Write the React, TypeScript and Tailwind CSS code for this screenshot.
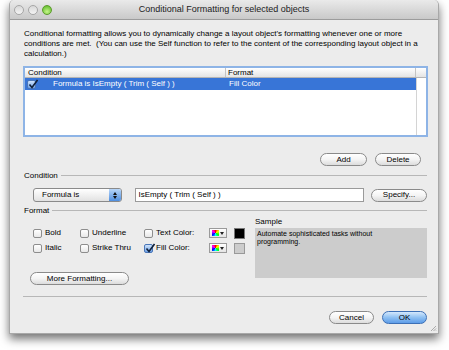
import React from "react";

const font = { fontFamily: '"Liberation Sans", Arial, sans-serif' };

const Check = ({ checked = false }: { checked?: boolean }) => (
  <span
    className={
      checked
        ? "relative inline-block w-[9px] h-[9px] rounded-[2px] border border-[#4a76b8] bg-gradient-to-b from-[#cfe3fb] to-[#6fa2e6] shrink-0"
        : "inline-block w-[9px] h-[9px] rounded-[2px] border border-[#8d8d8d] bg-gradient-to-b from-white to-[#e8e8e8] shrink-0"
    }
  >
    {checked && (
      <svg viewBox="0 0 10 10" className="absolute left-[0px] top-[-2px] w-[10px] h-[10px]">
        <path d="M1.5 5.5 L4 8.5 L9.5 1" stroke="#10203a" strokeWidth="1.6" fill="none" />
      </svg>
    )}
  </span>
);

const Button = ({ label, w, primary = false }: { label: string; w: string; primary?: boolean }) => (
  <div
    className={
      (primary
        ? "border-[#3c6fb5] bg-gradient-to-b from-[#d4e8fc] via-[#8ec0f2] to-[#5d9ce8] "
        : "border-[#8a8a8a] bg-gradient-to-b from-white via-[#f4f4f4] to-[#dcdcdc] ") +
      w +
      " h-[13px] rounded-full border flex items-center justify-center text-[8px] text-black leading-none"
    }
  >
    {label}
  </div>
);

const ColorPick = () => (
  <div className="w-[18px] h-[10px] border border-[#9a9a9a] bg-gradient-to-b from-white to-[#e4e4e4] flex items-center pl-[2px] gap-[1px]">
    <span className="w-[7px] h-[6px] bg-[conic-gradient(red,yellow,lime,cyan,blue,magenta,red)]" />
    <svg viewBox="0 0 4 3" className="w-[4px] h-[3px]">
      <path d="M0 0 H4 L2 3 Z" fill="#222" />
    </svg>
  </div>
);

export default function App() {
  return (
    <div className="w-[449px] h-[350px] bg-white overflow-hidden" style={font}>
      <div className="ml-[9px] w-[430px] h-[334px] rounded-t-[5px] bg-[#ececec] border-x border-b border-[#a8a8a8] shadow-[0_5px_10px_rgba(0,0,0,0.55)] flex flex-col">
        {/* title bar */}
        <div className="relative h-[20px] rounded-t-[5px] bg-gradient-to-b from-[#eaeaea] to-[#c9c9c9] border-b border-[#9c9c9c] flex items-center">
          <div className="flex gap-[4px] pl-[4px]">
            <span className="w-[10px] h-[10px] rounded-full border border-[#a6a6a6] bg-gradient-to-b from-[#d8d8d8] to-[#f4f4f4]" />
            <span className="w-[10px] h-[10px] rounded-full border border-[#a6a6a6] bg-gradient-to-b from-[#d8d8d8] to-[#f4f4f4]" />
            <span className="w-[10px] h-[10px] rounded-full border border-[#5c9a2c] bg-[radial-gradient(circle_at_50%_70%,#c6f58a,#52b51e)]" />
          </div>
          <div className="absolute inset-0 flex items-center justify-center text-[9px] text-[#222]">
            Conditional Formatting for selected objects
          </div>
        </div>

        <div className="pl-[13px] pr-[11px] flex flex-col">
          <p className="mt-[9px] pl-[1px] text-[8px] leading-[10px] text-black">
            Conditional formatting allows you to dynamically change a layout object's formatting whenever one or more
            conditions are met.&nbsp; (You can use the Self function to refer to the content of the corresponding layout
            object in a calculation.)
          </p>

          {/* table */}
          <div className="mt-[7px] w-[405px] h-[71px] border-2 border-[#8eb4e6] bg-white flex flex-col">
            <div className="h-[10px] flex bg-gradient-to-b from-white to-[#e4e4e4] border-b border-[#b5b5b5] text-[8px] leading-[10px]">
              <div className="w-[201px] pl-[3px] border-r border-[#c4c4c4]">Condition</div>
              <div className="w-[190px] pl-[2px] border-r border-[#c4c4c4]">Format</div>
              <div className="flex-1" />
            </div>
            <div className="flex flex-1">
              <div className="w-[391px] flex flex-col">
                <div className="h-[12px] bg-[#3875d7] flex items-center text-[8px] text-white">
                  <div className="w-[201px] flex items-center pl-[2px]">
                    <Check checked />
                    <span className="ml-[17px]">Formula is IsEmpty ( Trim ( Self ) )</span>
                  </div>
                  <div className="pl-[3px]">Fill Color</div>
                </div>
              </div>
              <div className="flex-1 border-l border-[#d4d4d4]" />
            </div>
          </div>

          {/* add / delete */}
          <div className="mt-[16px] flex justify-end gap-[8px] pr-[6px]">
            <Button label="Add" w="w-[47px]" />
            <Button label="Delete" w="w-[46px]" />
          </div>

          {/* condition */}
          <div className="mt-[5px] flex items-center gap-[3px] pl-[1px] text-[8px] leading-[10px]">
            <span>Condition</span>
            <span className="flex-1 h-[2px] border-t border-[#b7b7b7] border-b-white" />
          </div>
          <div className="mt-[7px] flex items-center pl-[10px]">
            <div className="w-[90px] h-[14px] rounded-[3px] border border-[#8a8a8a] bg-gradient-to-b from-white to-[#e2e2e2] flex items-center text-[8px]">
              <span className="flex-1 pl-[8px]">Formula is</span>
              <span className="w-[12px] h-full rounded-r-[2px] bg-gradient-to-b from-[#b8d6f8] to-[#4f8fe0] flex flex-col items-center justify-center gap-[1px]">
                <svg viewBox="0 0 4 3" className="w-[4px] h-[3px]"><path d="M0 3 H4 L2 0 Z" fill="#111" /></svg>
                <svg viewBox="0 0 4 3" className="w-[4px] h-[3px]"><path d="M0 0 H4 L2 3 Z" fill="#111" /></svg>
              </span>
            </div>
            <div className="ml-[13px] w-[230px] h-[14px] border border-[#9a9a9a] bg-white flex items-center pl-[2px] text-[8px]">
              IsEmpty ( Trim ( Self ) )
            </div>
            <div className="ml-[7px]">
              <Button label="Specify..." w="w-[56px]" />
            </div>
          </div>

          {/* format */}
          <div className="mt-[4px] flex items-center gap-[3px] pl-[1px] text-[8px] leading-[10px]">
            <span>Format</span>
            <span className="flex-1 h-[2px] border-t border-[#b7b7b7] border-b-white" />
          </div>
          <div className="flex mt-[1px]">
            <div className="w-[233px] flex flex-col pt-[11px] pl-[10px] text-[8px] leading-[10px]">
              <div className="flex items-center h-[10px]">
                <div className="w-[47px] flex items-center gap-[3px]"><Check />Bold</div>
                <div className="w-[64px] flex items-center gap-[3px]"><Check />Underline</div>
                <div className="w-[65px] flex items-center gap-[3px]"><Check />Text Color:</div>
                <ColorPick />
                <span className="ml-[7px] w-[11px] h-[11px] bg-black border border-[#777]" />
              </div>
              <div className="flex items-center h-[10px] mt-[5px]">
                <div className="w-[47px] flex items-center gap-[3px]"><Check />Italic</div>
                <div className="w-[64px] flex items-center gap-[3px]"><Check />Strike Thru</div>
                <div className="w-[65px] flex items-center gap-[3px]"><Check checked />Fill Color:</div>
                <ColorPick />
                <span className="ml-[7px] w-[11px] h-[11px] bg-[#cccccc] border border-[#999]" />
              </div>
              <div className="mt-[19px] -ml-[3px]">
                <Button label="More Formatting..." w="w-[99px]" />
              </div>
            </div>
            <div className="flex flex-col">
              <div className="text-[8px] leading-[10px] h-[11px]">Sample</div>
              <div className="w-[172px] h-[50px] bg-[#cccccc] px-[2px] pt-[2px] text-[7px] leading-[8px]">
                Automate sophisticated tasks without
                <br />
                programming.
              </div>
            </div>
          </div>

          <div className="mt-[11px] h-[2px] border-t border-[#b7b7b7] border-b-white" />

          <div className="mt-[13px] flex justify-end gap-[8px]">
            <Button label="Cancel" w="w-[45px]" />
            <Button label="OK" w="w-[45px]" primary />
          </div>
        </div>
        <div className="flex-1 flex justify-end items-end pr-[1px] pb-[1px]">
          <svg viewBox="0 0 8 8" className="w-[8px] h-[8px]">
            <path d="M7 2 L2 7 M7 4.5 L4.5 7 M7 6.5 L6.5 7" stroke="#999" strokeWidth="0.8" />
          </svg>
        </div>
      </div>
    </div>
  );
}
